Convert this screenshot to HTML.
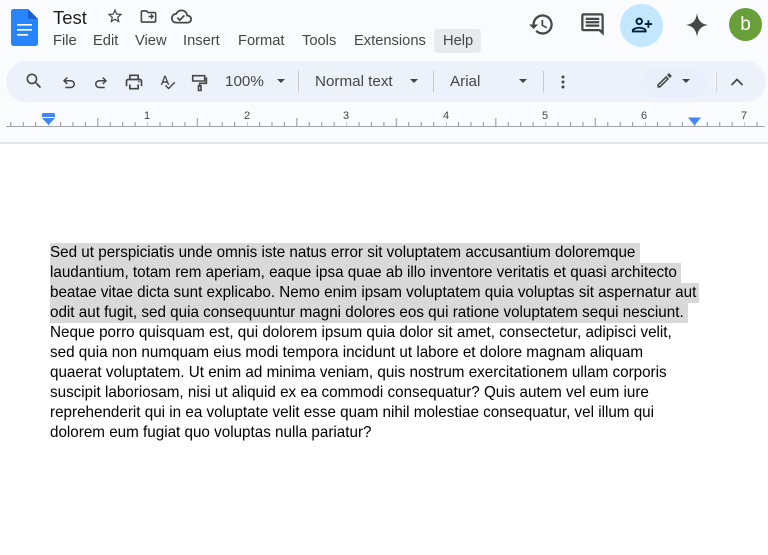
<!DOCTYPE html>
<html><head><meta charset="utf-8">
<style>
html,body{margin:0;padding:0;width:768px;height:555px;overflow:hidden;background:#fff;font-family:"Liberation Sans",Arial,sans-serif}
.a{position:absolute}
#top{position:absolute;left:0;top:0;width:768px;height:142px;background:#f9fbfd;border-bottom:2px solid #e3e5e8}
.m{position:absolute;top:33px;font-size:14.7px;line-height:17px;color:#444746;white-space:nowrap}
.t{position:absolute;top:73px;font-size:15.2px;line-height:17px;color:#444746;white-space:nowrap}
.i{position:absolute;fill:#444746}
.h{position:absolute;left:50px;height:20px;background:#d9d9d9}
.l{position:absolute;left:50px;font-size:15.22px;line-height:20px;height:20px;color:#000;white-space:nowrap}
.sep{position:absolute;top:71px;width:1px;height:21px;background:#c7c9cc}
.n{position:absolute;top:110px;font-size:11px;line-height:12px;color:#444746;width:12px;text-align:center}
.c{position:absolute;width:0;height:0;border-left:4px solid transparent;border-right:4px solid transparent;border-top:4px solid #444746}
</style></head><body>
<div id="top"></div>

<svg class="a" style="left:11px;top:9px" width="27" height="37" viewBox="0 0 27 37"><path d="M2.500 0H17l10 10v24.500a2.500 2.500 0 0 1-2.500 2.500h-22A2.500 2.500 0 0 1 0 34.500V2.500A2.500 2.500 0 0 1 2.500 0z" fill="#2684fc"/><path d="M17 0l10 10h-8a2 2 0 0 1-2-2z" fill="#1a5fd0"/><path d="M6 15h15v1.600H6zM6 20h15v1.600H6zM6 25h11v1.600H6z" fill="#fff"/></svg>

<div class="a" style="left:53px;top:7px;font-size:18.500px;line-height:21px;color:#1f1f1f">Test</div>

<svg class="i" style="left:106px;top:7px" width="18" height="18" viewBox="0 0 24 24"><path d="M22 9.240l-7.190-.62L12 2 9.190 8.630 2 9.240l5.460 4.730L5.820 21 12 17.270 18.180 21l-1.630-7.030L22 9.240zM12 15.400l-3.760 2.270 1-4.280-3.320-2.880 4.380-.38L12 6.100l1.710 4.040 4.380.38-3.320 2.880 1 4.280L12 15.400z"/></svg>
<svg class="i" style="left:139px;top:7px" width="19" height="19" viewBox="0 0 24 24"><path d="M20 6h-8l-2-2H4c-1.100 0-2 .9-2 2v12c0 1.100.9 2 2 2h16c1.100 0 2-.9 2-2V8c0-1.100-.9-2-2-2zm0 12H4V6h5.170l2 2H20v10zm-8-5h3v3l4-4-4-4v3h-3v2z"/></svg>
<svg class="i" style="left:171px;top:6px" width="21" height="21" viewBox="0 0 24 24"><path d="M19.350 10.040C18.670 6.590 15.640 4 12 4 9.110 4 6.600 5.640 5.350 8.040 2.340 8.360 0 10.910 0 14c0 3.310 2.690 6 6 6h13c2.760 0 5-2.240 5-5 0-2.640-2.050-4.780-4.650-4.960zM19 18H6c-2.210 0-4-1.790-4-4 0-2.050 1.530-3.760 3.560-3.970l1.070-.11.5-.95C8.080 7.140 9.940 6 12 6c2.620 0 4.880 1.860 5.390 4.430l.3 1.500 1.530.11c1.560.1 2.780 1.410 2.780 2.960 0 1.650-1.350 3-3 3zm-9-3.320l-2.090-2.090L6.500 14l3.500 3.500 6.010-6.010-1.410-1.410z"/></svg>

<div class="a" style="left:434px;top:29px;width:47px;height:24px;background:#e8eaed;border-radius:4px"></div>
<div class="m" style="left:53px">File</div>
<div class="m" style="left:93px">Edit</div>
<div class="m" style="left:135px">View</div>
<div class="m" style="left:183px">Insert</div>
<div class="m" style="left:238px">Format</div>
<div class="m" style="left:302px">Tools</div>
<div class="m" style="left:354px">Extensions</div>
<div class="m" style="left:443px">Help</div>

<svg class="i" style="left:528px;top:11px" width="27" height="27" viewBox="0 0 24 24"><path d="M13 3c-4.970 0-9 4.030-9 9H1l3.890 3.890.07.14L9 12H6c0-3.870 3.130-7 7-7s7 3.130 7 7-3.130 7-7 7c-1.930 0-3.680-.79-4.940-2.060l-1.420 1.420C8.270 19.990 10.510 21 13 21c4.970 0 9-4.030 9-9s-4.030-9-9-9zm-1 5v5l4.280 2.540.72-1.210-3.500-2.080V8H12z"/></svg>
<svg class="i" style="left:579px;top:11px" width="27" height="27" viewBox="0 0 24 24"><path d="M21.990 4c0-1.100-.89-2-1.990-2H4c-1.100 0-2 .9-2 2v12c0 1.100.9 2 2 2h14l4 4-.01-18zM20 4v13.170L18.830 16H4V4h16zM6 12h12v2H6zm0-3h12v2H6zm0-3h12v2H6z"/></svg>
<div class="a" style="left:620px;top:4px;width:43px;height:43px;border-radius:50%;background:#c2e7ff"></div>
<svg class="a" style="left:631px;top:14px;fill:#001d35" width="22" height="22" viewBox="0 0 24 24"><g transform="matrix(-1 0 0 1 24 0)"><path d="M15 12c2.210 0 4-1.790 4-4s-1.790-4-4-4-4 1.790-4 4 1.790 4 4 4zm0-6c1.100 0 2 .9 2 2s-.9 2-2 2-2-.9-2-2 .9-2 2-2zm0 8c-2.670 0-8 1.340-8 4v2h16v-2c0-2.660-5.330-4-8-4zm-6 4c.22-.72 3.310-2 6-2 2.700 0 5.800 1.290 6 2H9z"/><path d="M6 15v-3h3v-2H6V7H4v3H1v2h3v3z"/></g></svg>
<svg class="i" style="left:686px;top:13px" width="22" height="24" viewBox="0 0 24 24" preserveAspectRatio="none"><path d="M12 0c1 7.500 4.500 11 12 12-7.500 1-11 4.500-12 12-1-7.500-4.500-11-12-12 7.500-1 11-4.500 12-12z"/></svg>
<div class="a" style="left:729px;top:8px;width:33px;height:33px;border-radius:50%;background:#689f38;color:#fff;font-size:19px;line-height:33px;text-align:center">b</div>

<div class="a" style="left:6px;top:61px;width:760px;height:41px;border-radius:21px;background:#edf2fa"></div>
<svg class="i" style="left:24px;top:71px" width="20" height="20" viewBox="0 0 24 24"><path d="M15.500 14h-.79l-.28-.27C15.410 12.590 16 11.110 16 9.500 16 5.910 13.090 3 9.500 3S3 5.910 3 9.500 5.910 16 9.500 16c1.610 0 3.090-.59 4.230-1.570l.27.28v.79l5 4.990L20.490 19l-4.990-5zm-6 0C7.010 14 5 11.990 5 9.500S7.010 5 9.500 5 14 7.010 14 9.500 11.990 14 9.500 14z"/></svg>
<svg class="i" style="left:60px;top:74px" width="18" height="18" viewBox="0 0 24 24"><path d="M7 19v-2h7.100q1.575 0 2.737-1Q18 15 18 13.500T16.837 11Q15.675 10 14.100 10H7.800l2.600 2.600L9 14 4 9l5-5 1.400 1.400L7.800 8h6.300q2.425 0 4.163 1.575Q20 11.150 20 13.500t-1.737 3.925Q16.525 19 14.100 19Z"/></svg>
<svg class="i" style="left:92px;top:74px" width="18" height="18" viewBox="0 0 24 24"><g transform="matrix(-1 0 0 1 24 0)"><path d="M7 19v-2h7.100q1.575 0 2.737-1Q18 15 18 13.500T16.837 11Q15.675 10 14.100 10H7.800l2.600 2.600L9 14 4 9l5-5 1.400 1.400L7.800 8h6.300q2.425 0 4.163 1.575Q20 11.150 20 13.500t-1.737 3.925Q16.525 19 14.100 19Z"/></g></svg>
<svg class="i" style="left:124px;top:72px" width="20" height="20" viewBox="0 0 24 24"><path d="M19 8h-1V3H6v5H5c-1.660 0-3 1.340-3 3v6h4v4h12v-4h4v-6c0-1.660-1.340-3-3-3zM8 5h8v3H8V5zm8 14H8v-4h8v4zm2-2v-2H6v2H4v-6c0-.55.45-1 1-1h14c.55 0 1 .45 1 1v6h-2z"/><circle cx="18" cy="11.500" r="1"/></svg>
<svg class="i" style="left:159px;top:73px" width="17" height="18" viewBox="0 0 24 24"><path d="M12.450 16h2.090L9.430 3H7.570L2.460 16h2.090l1.120-3h5.640l1.140 3zm-6.020-5L8.500 5.480 10.570 11H6.430zm15.160.59l-8.090 8.090L9.830 16l-1.410 1.410 5.090 5.090L23 13l-1.410-1.410z"/></svg>
<svg class="a" style="left:190px;top:73px" width="18" height="19" viewBox="0 0 18 19"><path d="M2.700 2.700h12v5.300h-12zM14.700 5.300h1.700v5H9.700v2.500M8.500 12.800h2.500v4.700H8.500z" fill="none" stroke="#444746" stroke-width="1.600"/></svg>
<div class="t" style="left:225px">100%</div>
<div class="c" style="left:277px;top:79px"></div>
<div class="sep" style="left:298px"></div>
<div class="t" style="left:315px">Normal text</div>
<div class="c" style="left:410px;top:79px"></div>
<div class="sep" style="left:433px"></div>
<div class="t" style="left:450px">Arial</div>
<div class="c" style="left:519px;top:79px"></div>
<div class="sep" style="left:543px"></div>
<svg class="i" style="left:561px;top:75px" width="4" height="14" viewBox="0 0 4 14"><circle cx="2" cy="2" r="1.500"/><circle cx="2" cy="7" r="1.500"/><circle cx="2" cy="12" r="1.500"/></svg>

<div class="a" style="left:641px;top:67px;width:66px;height:30px;border-radius:15px;background:#e9f0fb"></div>
<svg class="i" style="left:655px;top:71px" width="19" height="19" viewBox="0 0 24 24"><path d="M3 17.250V21h3.750L17.810 9.940l-3.750-3.750L3 17.250zM5.920 19H5v-.92l9.060-9.060.92.92L5.920 19zM20.710 7.040c.39-.39.39-1.020 0-1.410l-2.340-2.340c-.39-.39-1.020-.39-1.410 0l-1.830 1.830 3.750 3.750 1.830-1.830z"/></svg>
<div class="c" style="left:682px;top:79px"></div>
<div class="sep" style="left:716px;background:#d3d6da"></div>
<svg class="a" style="left:730px;top:77px" width="14" height="10" viewBox="0 0 14 10"><path d="M1.500 8L7 2.500 12.500 8" fill="none" stroke="#444746" stroke-width="1.700"/></svg>

<svg class="a" style="left:0;top:108px" width="768" height="22" viewBox="0 0 768 22">
<defs><pattern id="p" patternUnits="userSpaceOnUse" x="48.100" y="0" width="99.500" height="22">
<path d="M0 14v4M12.440 14v4M24.880 14v4M37.310 14v4M49.750 10v8M62.190 14v4M74.630 14v4M87.060 14v4" stroke="#8f9296" stroke-width="1" fill="none"/>
</pattern></defs>
<rect x="6" y="0" width="759" height="19" fill="url(#p)"/>
<rect x="6" y="18" width="759" height="1" fill="#a2a5a8"/>
</svg>
<div class="n" style="left:141px">1</div>
<div class="n" style="left:241px">2</div>
<div class="n" style="left:340px">3</div>
<div class="n" style="left:440px">4</div>
<div class="n" style="left:539px">5</div>
<div class="n" style="left:638px">6</div>
<div class="n" style="left:738px">7</div>
<svg class="a" style="left:42px;top:112px" width="13" height="14" viewBox="0 0 13 14"><path d="M0 2a1 1 0 0 1 1-1h11a1 1 0 0 1 1 1v3H0z" fill="#4285f4"/><path d="M0 6h13l-6.500 7z" fill="#4285f4"/></svg>
<svg class="a" style="left:688px;top:117px" width="13" height="9" viewBox="0 0 13 9"><path d="M0 .5h13L6.500 8.500z" fill="#4285f4"/></svg>

<div class="h" style="top:243px;width:590px"></div>
<div class="h" style="top:263px;width:631px"></div>
<div class="h" style="top:283px;width:649px"></div>
<div class="h" style="top:303px;width:638px"></div>
<div class="l" style="top:243px">Sed ut perspiciatis unde omnis iste natus error sit voluptatem accusantium doloremque</div>
<div class="l" style="top:263px">laudantium, totam rem aperiam, eaque ipsa quae ab illo inventore veritatis et quasi architecto</div>
<div class="l" style="top:283px">beatae vitae dicta sunt explicabo. Nemo enim ipsam voluptatem quia voluptas sit aspernatur aut</div>
<div class="l" style="top:303px">odit aut fugit, sed quia consequuntur magni dolores eos qui ratione voluptatem sequi nesciunt.</div>
<div class="l" style="top:323px">Neque porro quisquam est, qui dolorem ipsum quia dolor sit amet, consectetur, adipisci velit,</div>
<div class="l" style="top:343px">sed quia non numquam eius modi tempora incidunt ut labore et dolore magnam aliquam</div>
<div class="l" style="top:363px">quaerat voluptatem. Ut enim ad minima veniam, quis nostrum exercitationem ullam corporis</div>
<div class="l" style="top:383px">suscipit laboriosam, nisi ut aliquid ex ea commodi consequatur? Quis autem vel eum iure</div>
<div class="l" style="top:403px">reprehenderit qui in ea voluptate velit esse quam nihil molestiae consequatur, vel illum qui</div>
<div class="l" style="top:423px">dolorem eum fugiat quo voluptas nulla pariatur?</div>
</body></html>
